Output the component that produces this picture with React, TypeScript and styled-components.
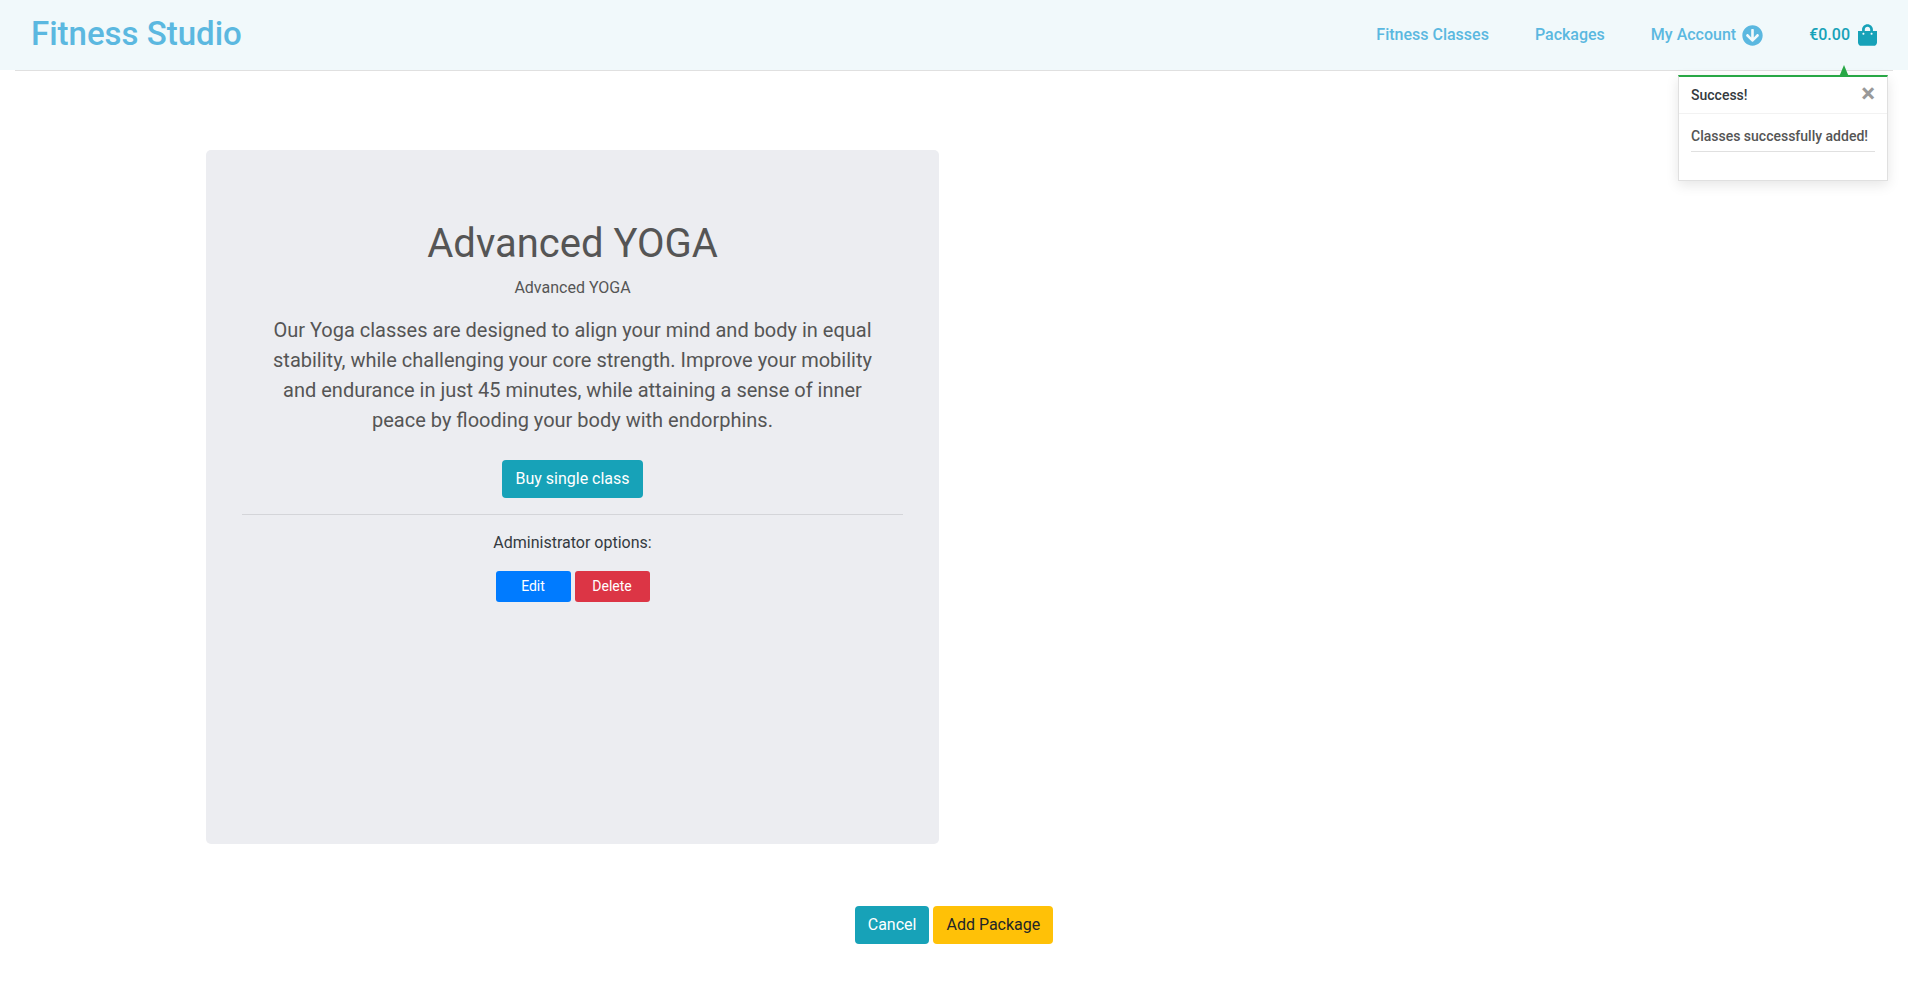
import React, { useState } from "react";
import styled, { createGlobalStyle } from "styled-components";

const GlobalStyle = createGlobalStyle`
  *, *::before, *::after { box-sizing: border-box; }
  body {
    margin: 0;
    background: #fff;
    color: #555;
    font-family: Roboto, "Liberation Sans", sans-serif;
    font-size: 16px;
    line-height: 24px;
  }
  h1, h2, p { margin: 0; font-weight: 400; }
`;

const Header = styled.header`
  position: relative;
  display: flex;
  align-items: center;
  justify-content: space-between;
  height: 70px;
  padding: 0 31px;
  background: #f1f9fb;
  font-weight: 500;
`;

const Brand = styled.a`
  padding-bottom: 2px;
  color: #5bb8e0;
  font-size: 33px;
  line-height: 40px;
  text-decoration: none;
`;

const Nav = styled.nav`
  display: flex;
  align-items: center;
  gap: 46px;
`;

const NavLink = styled.a<{ $accent?: boolean }>`
  display: flex;
  align-items: center;
  gap: ${(p) => (p.$accent ? 8 : 6)}px;
  color: ${(p) => (p.$accent ? "#17a2b8" : "#5bb8e0")};
  text-decoration: none;
`;

const HeaderRule = styled.hr`
  margin: 0 15px;
  border: 0;
  border-top: 1px solid #e0e0e0;
`;

const Toast = styled.section`
  position: absolute;
  z-index: 2;
  top: 75px;
  right: 20px;
  min-width: 210px;
  height: 106px;
  border: 1px solid #e0e0e0;
  border-top: 2px solid #28a745;
  background: #fff;
  box-shadow: 0 4px 12px rgba(0, 0, 0, 0.1);
  font-size: 14px;
  line-height: 21px;

  &::before {
    content: "";
    position: absolute;
    right: 38px;
    bottom: 100%;
    border: 5px solid transparent;
    border-top: 0;
    border-bottom: 12px solid #28a745;
  }
`;

const ToastHeader = styled.div`
  display: flex;
  justify-content: space-between;
  height: 37px;
  padding: 8px 12px;
  border-bottom: 1px solid #f2f2f2;
  color: #343a40;
`;

const CloseButton = styled.button`
  align-self: flex-start;
  padding: 0;
  border: 0;
  background: none;
  color: #999;
  font: 700 26px/16px Roboto, "Liberation Sans", sans-serif;
  cursor: pointer;
`;

const ToastBody = styled.div`
  padding: 12px;
`;

const ToastMessage = styled.p`
  height: 26px;
  border-bottom: 1px solid #e0e0e0;
  font-weight: 500;
`;

const Main = styled.main`
  padding: 79px 190px 56px;
`;

const Grid = styled.div`
  display: grid;
  grid-template-columns: 1fr 1fr;
  gap: 30px;
  padding: 0 16px;
`;

const Card = styled.article`
  display: flex;
  flex-direction: column;
  align-items: center;
  min-height: 694px;
  padding: 70px 36px 64px;
  border-radius: 5px;
  background: #ecedf1;
  text-align: center;
`;

const CardTitle = styled.h1`
  margin-bottom: 8px;
  font-size: 40px;
  line-height: 48px;
`;

const Description = styled.p`
  margin: 15px 0 25px;
  padding: 0 28px;
  font-size: 20px;
  line-height: 30px;
`;

const Rule = styled.hr`
  width: 100%;
  margin: 16px 0;
  border: 0;
  border-top: 1px solid #d4d5d9;
`;

const AdminLabel = styled.p`
  margin-bottom: 16px;
  color: #343a40;
`;

const Buttons = styled.div`
  display: flex;
  justify-content: center;
  gap: 4px;
`;

const Button = styled.button<{ $bg: string; $color?: string; $small?: boolean }>`
  min-width: ${(p) => (p.$small ? "75px" : "0")};
  padding: ${(p) => (p.$small ? "5px 9px" : "7px 13px")};
  border: 0;
  border-radius: ${(p) => (p.$small ? 3 : 4)}px;
  background: ${(p) => p.$bg};
  color: ${(p) => p.$color ?? "#fff"};
  font-family: inherit;
  font-size: ${(p) => (p.$small ? 14 : 16)}px;
  line-height: ${(p) => (p.$small ? 21 : 24)}px;
  cursor: pointer;
`;

const Actions = styled(Buttons)`
  margin-top: 62px;
`;

const ArrowDown = () => (
  <svg width="21" height="21" viewBox="0 0 512 512" fill="currentColor" aria-hidden="true">
    <path d="M504 256c0 137-111 248-248 248S8 393 8 256 119 8 256 8s248 111 248 248zm-143.600-28.900L288 302.600V120c0-13.300-10.700-24-24-24h-16c-13.300 0-24 10.700-24 24v182.600l-72.400-75.500c-9.300-9.700-24.800-9.900-34.300-.4l-10.900 11c-9.400 9.400-9.400 24.600 0 33.900L239 404.300c9.400 9.400 24.600 9.400 33.900 0l132.700-132.700c9.400-9.400 9.400-24.600 0-33.900l-10.900-11c-9.500-9.500-25-9.300-34.300.4z" />
  </svg>
);

const Bag = () => (
  <svg width="19" height="22" viewBox="0 0 448 512" fill="currentColor" aria-hidden="true">
    <path d="M352 160v-32C352 57.420 294.579 0 224 0 153.420 0 96 57.420 96 128v32H0v272c0 44.183 35.817 80 80 80h288c44.183 0 80-35.817 80-80V160h-96zm-192-32c0-35.290 28.710-64 64-64s64 28.710 64 64v32H160v-32zm160 120c-13.255 0-24-10.745-24-24s10.745-24 24-24 24 10.745 24 24-10.745 24-24 24zm-192 0c-13.255 0-24-10.745-24-24s10.745-24 24-24 24 10.745 24 24-10.745 24-24 24z" />
  </svg>
);

export default function App() {
  const [showToast, setShowToast] = useState(true);
  return (
    <>
      <GlobalStyle />
      <Header>
        <Brand href="#">Fitness Studio</Brand>
        <Nav>
          <NavLink href="#classes">Fitness Classes</NavLink>
          <NavLink href="#packages">Packages</NavLink>
          <NavLink href="#account">My Account <ArrowDown /></NavLink>
          <NavLink href="#bag" $accent>€0.00 <Bag /></NavLink>
        </Nav>
        {showToast && (
          <Toast role="status">
            <ToastHeader>
              Success!
              <CloseButton aria-label="Close" onClick={() => setShowToast(false)}>×</CloseButton>
            </ToastHeader>
            <ToastBody>
              <ToastMessage>Classes successfully added!</ToastMessage>
            </ToastBody>
          </Toast>
        )}
      </Header>
      <HeaderRule />
      <Main>
        <Grid>
          <Card>
            <CardTitle>Advanced YOGA</CardTitle>
            <p>Advanced YOGA</p>
            <Description>
              Our Yoga classes are designed to align your mind and body in equal stability, while
              challenging your core strength. Improve your mobility and endurance in just 45
              minutes, while attaining a sense of inner peace by flooding your body with endorphins.
            </Description>
            <Button $bg="#17a2b8">Buy single class</Button>
            <Rule />
            <AdminLabel>Administrator options:</AdminLabel>
            <Buttons>
              <Button $bg="#007bff" $small>Edit</Button>
              <Button $bg="#dc3545" $small>Delete</Button>
            </Buttons>
          </Card>
        </Grid>
        <Actions>
          <Button $bg="#17a2b8">Cancel</Button>
          <Button $bg="#ffc107" $color="#212529">Add Package</Button>
        </Actions>
      </Main>
    </>
  );
}
